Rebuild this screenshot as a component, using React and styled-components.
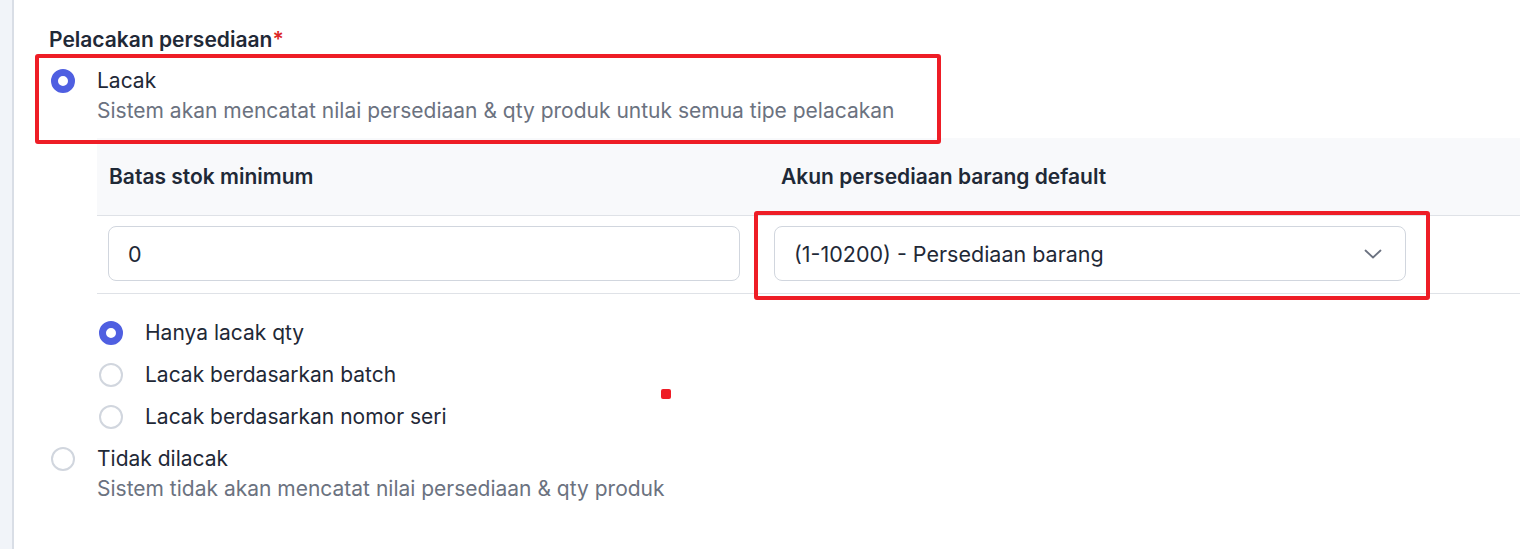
import React from 'react';
import styled, { createGlobalStyle } from 'styled-components';

const GlobalStyle = createGlobalStyle`
  html, body {
    margin: 0;
    padding: 0;
    background: #ffffff;
  }
  body {
    font-family: Inter, 'Noto Sans', 'Liberation Sans', sans-serif;
    color: #1f2937;
  }
  * {
    box-sizing: border-box;
  }
`;

const Page = styled.div`
  display: flex;
  min-height: 549px;
  overflow: hidden;
`;

const SideStrip = styled.div`
  width: 14px;
  flex-shrink: 0;
  background: #f1f4f9;
  border-right: 2px solid #d9dee6;
`;

const Main = styled.div`
  flex: 1;
  padding: 26px 0 0 35px;
  display: flex;
  flex-direction: column;
`;

const Title = styled.div`
  font-size: 21px;
  line-height: 28px;
  font-weight: 600;
  color: #1f2937;
`;

const Required = styled.span`
  color: #dc2626;
`;

const Option = styled.div`
  position: relative;
  display: flex;
  align-items: flex-start;
  gap: ${({ $gap }) => $gap}px;
  padding-left: 2px;
  margin-top: ${({ $top }) => $top || 0}px;
`;

const Radio = styled.span`
  width: 24px;
  height: 24px;
  margin-top: 2px;
  flex-shrink: 0;
  border-radius: 50%;
  background: #ffffff;
  border: ${({ $checked }) => ($checked ? '7px solid #4f5fe1' : '2px solid #d1d6de')};
`;

const OptionText = styled.div`
  display: flex;
  flex-direction: column;
  gap: 2px;
`;

const Label = styled.div`
  font-size: 21px;
  line-height: 28px;
  color: #1f2937;
`;

const Description = styled.div`
  font-size: 21px;
  line-height: 28px;
  color: #6b7280;
`;

const Highlight = styled.div`
  position: absolute;
  top: ${({ $top }) => $top}px;
  left: ${({ $left }) => $left}px;
  bottom: ${({ $bottom }) => $bottom}px;
  width: ${({ $width }) => ($width ? `${$width}px` : 'auto')};
  right: ${({ $right }) => ($right === undefined ? 'auto' : `${$right}px`)};
  border: 4px solid #ee1d26;
  border-radius: 3px;
  pointer-events: none;
  z-index: 2;
`;

const Nested = styled.div`
  margin-left: 48px;
  margin-top: 13px;
  display: flex;
  flex-direction: column;
`;

const Table = styled.div`
  display: grid;
  grid-template-columns: 666px 666px 1fr;
`;

const HeadCell = styled.div`
  height: 78px;
  display: flex;
  align-items: center;
  padding-left: ${({ $pad }) => $pad}px;
  background: #f8f9fb;
  border-bottom: 1px solid #dfe2e7;
  font-size: 21px;
  font-weight: 600;
  color: #1f2937;
`;

const BodyCell = styled.div`
  height: 78px;
  padding: 10px 0 0 11px;
  border-bottom: 1px solid #dfe2e7;
`;

const Field = styled.div`
  position: relative;
  width: 632px;
  height: 55px;
  display: flex;
  align-items: center;
  justify-content: space-between;
  padding: 0 23px 0 19px;
  border: 1px solid #d1d6de;
  border-radius: 8px;
  background: #ffffff;
  font-size: 21.5px;
  color: #1f2937;
`;

const SubOptions = styled.div`
  position: relative;
  margin-top: 25px;
  display: flex;
  flex-direction: column;
  gap: 14px;
`;

const Dot = styled.span`
  position: absolute;
  left: 564px;
  top: 70px;
  width: 10px;
  height: 10px;
  border-radius: 2px;
  background: #ee1d26;
`;

const Chevron = () => (
  <svg width="18" height="10" viewBox="0 0 18 10" fill="none">
    <path d="M1.5 1.5 L9 8.5 L16.5 1.5" stroke="#6b7280" strokeWidth="1.8" strokeLinecap="round" strokeLinejoin="round" />
  </svg>
);

const subOptions = [
  { label: 'Hanya lacak qty', checked: true },
  { label: 'Lacak berdasarkan batch', checked: false },
  { label: 'Lacak berdasarkan nomor seri', checked: false },
];

export default function App() {
  return (
    <>
      <GlobalStyle />
      <Page>
        <SideStrip />
        <Main>
          <Title>
            Pelacakan persediaan<Required>*</Required>
          </Title>

          <Option $gap={22} $top={13}>
            <Radio $checked />
            <OptionText>
              <Label>Lacak</Label>
              <Description>
                Sistem akan mencatat nilai persediaan &amp; qty produk untuk semua tipe pelacakan
              </Description>
            </OptionText>
            <Highlight $top={-13} $left={-14} $bottom={-19} $width={906} />
          </Option>

          <Nested>
            <Table>
              <HeadCell $pad={12}>Batas stok minimum</HeadCell>
              <HeadCell $pad={18}>Akun persediaan barang default</HeadCell>
              <HeadCell $pad={0} />
              <BodyCell>
                <Field>0</Field>
              </BodyCell>
              <BodyCell>
                <Field>
                  (1-10200) - Persediaan barang
                  <Chevron />
                  <Highlight $top={-16} $left={-21} $bottom={-20} $right={-25} />
                </Field>
              </BodyCell>
              <BodyCell />
            </Table>

            <SubOptions>
              {subOptions.map((opt) => (
                <Option key={opt.label} $gap={22}>
                  <Radio $checked={opt.checked} />
                  <Label>{opt.label}</Label>
                </Option>
              ))}
              <Dot />
            </SubOptions>
          </Nested>

          <Option $gap={22} $top={14}>
            <Radio />
            <OptionText>
              <Label>Tidak dilacak</Label>
              <Description>Sistem tidak akan mencatat nilai persediaan &amp; qty produk</Description>
            </OptionText>
          </Option>
        </Main>
      </Page>
    </>
  );
}
